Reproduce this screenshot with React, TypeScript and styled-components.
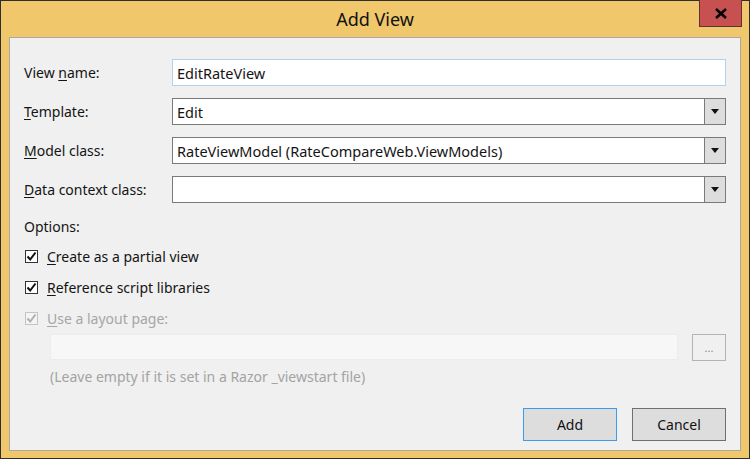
import React from 'react'
import styled, { createGlobalStyle } from 'styled-components'

const Global = createGlobalStyle`
  html, body { margin: 0; padding: 0; background: #f0c86b; }
  body { font-family: "Noto Sans", "Open Sans", sans-serif; }
`

const Window = styled.div`
  width: 750px;
  height: 459px;
  box-sizing: border-box;
  border: 1px solid #2e2e2e;
  background: #f0c86b;
  display: flex;
  flex-direction: column;
  padding: 0 8px 7px 8px;
`
const TitleBar = styled.div`
  height: 36px;
  position: relative;
  display: flex;
  align-items: center;
  justify-content: center;
`
const Title = styled.div`
  font-size: 18px;
  color: #111;
  margin-top: -1px;
`
const CloseButton = styled.div`
  position: absolute;
  top: -1px;
  right: -1px;
  width: 43px;
  height: 27px;
  box-sizing: border-box;
  background: #c75050;
  border: 1px solid #5a3434;
  border-top: none;
  display: flex;
  align-items: center;
  justify-content: center;
`
const Client = styled.div`
  flex: 1;
  background: #f0f0f0;
  border: 1px solid #a8a8a8;
  padding: 21px 14px 0 14px;
  display: flex;
  flex-direction: column;
  font-size: 14px;
  color: #141414;
`
const FormGrid = styled.div`
  display: grid;
  grid-template-columns: 148px 1fr;
  row-gap: 12px;
  align-items: center;
`
const Label = styled.div`
  line-height: 16px;
`
const TextBox = styled.div<{ $focus?: boolean }>`
  height: 27px;
  box-sizing: border-box;
  background: #fff;
  border: 1px solid ${p => (p.$focus ? '#b9d1e4' : '#7a7a7a')};
  display: flex;
  align-items: center;
  padding-left: 4px;
  font-size: 14.5px;
`
const Combo = styled.div`
  height: 27px;
  box-sizing: border-box;
  background: #fff;
  border: 1px solid #7a7a7a;
  display: flex;
  align-items: stretch;
  font-size: 14.5px;
`
const ComboText = styled.div`
  flex: 1;
  display: flex;
  align-items: center;
  padding-left: 4px;
`
const ComboButton = styled.div`
  width: 20px;
  border-left: 1px solid #7a7a7a;
  background: #dddddd;
  display: flex;
  align-items: center;
  justify-content: center;
`
const OptionsLabel = styled.div`
  margin-top: 16px;
  line-height: 16px;
`
const CheckRow = styled.div<{ $disabled?: boolean }>`
  display: flex;
  align-items: center;
  height: 16px;
  margin-top: 15px;
  color: ${p => (p.$disabled ? '#a6a6a6' : '#141414')};
  &:first-of-type {
    margin-top: 13px;
  }
`
const Box = styled.div<{ $disabled?: boolean }>`
  width: 13px;
  height: 13px;
  box-sizing: border-box;
  margin-left: 1px;
  margin-right: 9px;
  background: ${p => (p.$disabled ? '#f4f4f4' : '#fff')};
  border: 1px solid ${p => (p.$disabled ? '#c4c4c4' : '#333')};
  display: flex;
  align-items: center;
  justify-content: center;
`
const Mn = styled.span`
  text-decoration: underline;
  text-underline-offset: 2px;
`
const Checks = styled.div`
  display: flex;
  flex-direction: column;
`
const LayoutRow = styled.div`
  display: flex;
  gap: 14px;
  margin-top: 8px;
  margin-left: 26px;
`
const DisabledInput = styled.div`
  flex: 1;
  height: 26px;
  box-sizing: border-box;
  background: #f7f7f7;
  border: 1px solid #ececec;
`
const BrowseButton = styled.div`
  width: 34px;
  height: 27px;
  box-sizing: border-box;
  border: 1px solid #b4b4b4;
  background: #f0f0f0;
  color: #888;
  font-size: 11px;
  display: flex;
  align-items: center;
  justify-content: center;
`
const Hint = styled.div`
  margin-left: 26px;
  margin-top: 8px;
  color: #a3a3a3;
  line-height: 16px;
`
const Footer = styled.div`
  display: flex;
  justify-content: flex-end;
  gap: 15px;
  margin-top: 23px;
`
const Button = styled.div<{ $default?: boolean }>`
  width: 94px;
  height: 33px;
  box-sizing: border-box;
  background: #dddddd;
  border: 1px solid ${p => (p.$default ? '#3c9af0' : '#707070')};
  display: flex;
  align-items: center;
  justify-content: center;
  color: #111;
`

const Arrow = () => (
  <svg width="8" height="5" viewBox="0 0 8 5">
    <path d="M0 0 H8 L4 5 Z" fill="#111" />
  </svg>
)

const Check = ({ color }: { color: string }) => (
  <svg width="11" height="11" viewBox="0 0 11 11">
    <path d="M1.5 5.5 L4.2 8.5 L9.5 1.5" fill="none" stroke={color} strokeWidth="2" />
  </svg>
)

const App = () => {
  return (
    <>
      <Global />
      <Window>
        <TitleBar>
          <Title>Add View</Title>
          <CloseButton>
            <svg width="12" height="11" viewBox="0 0 12 11">
              <path d="M1 1 L11 10 M11 1 L1 10" stroke="#000" strokeWidth="2.6" />
            </svg>
          </CloseButton>
        </TitleBar>
        <Client>
          <FormGrid>
            <Label>View <Mn>n</Mn>ame:</Label>
            <TextBox $focus>EditRateView</TextBox>
            <Label><Mn>T</Mn>emplate:</Label>
            <Combo>
              <ComboText>Edit</ComboText>
              <ComboButton><Arrow /></ComboButton>
            </Combo>
            <Label><Mn>M</Mn>odel class:</Label>
            <Combo>
              <ComboText>RateViewModel (RateCompareWeb.ViewModels)</ComboText>
              <ComboButton><Arrow /></ComboButton>
            </Combo>
            <Label><Mn>D</Mn>ata context class:</Label>
            <Combo>
              <ComboText />
              <ComboButton><Arrow /></ComboButton>
            </Combo>
          </FormGrid>
          <OptionsLabel>Options:</OptionsLabel>
          <Checks>
            <CheckRow>
              <Box><Check color="#111" /></Box>
              <span><Mn>C</Mn>reate as a partial view</span>
            </CheckRow>
            <CheckRow>
              <Box><Check color="#111" /></Box>
              <span><Mn>R</Mn>eference script libraries</span>
            </CheckRow>
            <CheckRow $disabled>
              <Box $disabled><Check color="#b0b0b0" /></Box>
              <span><Mn>U</Mn>se a layout page:</span>
            </CheckRow>
          </Checks>
          <LayoutRow>
            <DisabledInput />
            <BrowseButton>...</BrowseButton>
          </LayoutRow>
          <Hint>(Leave empty if it is set in a Razor _viewstart file)</Hint>
          <Footer>
            <Button $default>Add</Button>
            <Button>Cancel</Button>
          </Footer>
        </Client>
      </Window>
    </>
  )
}

export default App
